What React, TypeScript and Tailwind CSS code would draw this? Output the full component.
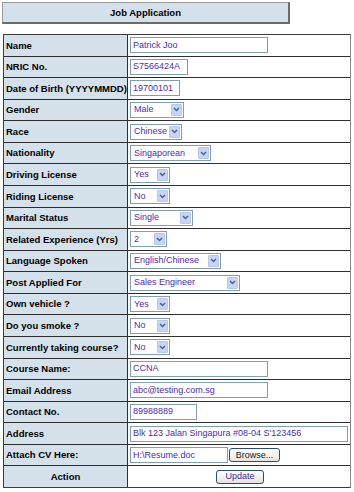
import React from "react";

type Row = {
  label: string;
  kind: "input" | "select" | "file" | "action";
  value?: string;
  w?: number;
};

const rows: Row[] = [
  { label: "Name", kind: "input", value: "Patrick Joo", w: 138 },
  { label: "NRIC No.", kind: "input", value: "S7566424A", w: 58 },
  { label: "Date of Birth (YYYYMMDD)", kind: "input", value: "19700101", w: 50 },
  { label: "Gender", kind: "select", value: "Male", w: 54 },
  { label: "Race", kind: "select", value: "Chinese", w: 52 },
  { label: "Nationality", kind: "select", value: "Singaporean", w: 81 },
  { label: "Driving License", kind: "select", value: "Yes", w: 40 },
  { label: "Riding License", kind: "select", value: "No", w: 40 },
  { label: "Marital Status", kind: "select", value: "Single", w: 63 },
  { label: "Related Experience (Yrs)", kind: "select", value: "2", w: 37 },
  { label: "Language Spoken", kind: "select", value: "English/Chinese", w: 91 },
  { label: "Post Applied For", kind: "select", value: "Sales Engineer", w: 110 },
  { label: "Own vehicle ?", kind: "select", value: "Yes", w: 40 },
  { label: "Do you smoke ?", kind: "select", value: "No", w: 40 },
  { label: "Currently taking course?", kind: "select", value: "No", w: 40 },
  { label: "Course Name:", kind: "input", value: "CCNA", w: 138 },
  { label: "Email Address", kind: "input", value: "abc@testing.com.sg", w: 138 },
  { label: "Contact No.", kind: "input", value: "89988889", w: 67 },
  { label: "Address", kind: "input", value: "Blk 123 Jalan Singapura #08-04 S'123456", w: 218 },
  { label: "Attach CV Here:", kind: "file", value: "H:\\Resume.doc", w: 98 },
  { label: "Action", kind: "action" },
];

function TextBox({ value, w }: { value?: string; w?: number }) {
  return (
    <div
      className="flex h-[16px] shrink-0 items-center overflow-hidden whitespace-nowrap border border-[#7f9db9] bg-white px-[2px] text-[9px] text-[#4a2cb8]"
      style={{ width: w }}
    >
      {value}
    </div>
  );
}

function Select({ value, w }: { value?: string; w?: number }) {
  return (
    <div
      className="flex h-[16px] shrink-0 items-center justify-between border border-[#7f9db9] bg-white pl-[3px] pr-[1px] text-[9px] text-[#4a2cb8]"
      style={{ width: w }}
    >
      <span className="overflow-hidden whitespace-nowrap">{value}</span>
      <span className="flex h-[12px] w-[11px] shrink-0 items-center justify-center rounded-[1px] border border-[#b7c8f0] bg-[#c6d5f7]">
        <svg width="7" height="5" viewBox="0 0 7 5">
          <path d="M1 1 L3.5 3.5 L6 1" fill="none" stroke="#4d6185" strokeWidth="1.5" />
        </svg>
      </span>
    </div>
  );
}

function Btn({ children, w, text }: { children: React.ReactNode; w: number; text: string }) {
  return (
    <div
      className={`flex h-[14px] shrink-0 items-center justify-center rounded-[3px] border border-[#2a4a7c] bg-gradient-to-b from-white to-[#e6e4dc] text-[9px] ${text}`}
      style={{ width: w }}
    >
      {children}
    </div>
  );
}

export default function App() {
  return (
    <div className="h-[492px] w-[354px] bg-white pt-[2px] text-[9.5px] leading-none text-black [font-family:'Liberation_Sans',Arial,sans-serif]">
      <div className="ml-[2px] flex h-[22px] w-[288px] items-center justify-center border-l border-t border-b-2 border-r-2 border-l-[#999] border-t-[#999] border-b-[#6b6b6b] border-r-[#6b6b6b] bg-[#d4e0ea] font-bold">
        Job Application
      </div>

      <div className="ml-[3px] mt-[10px] grid h-[454px] w-[348px] grid-cols-[123px_222px] grid-rows-[repeat(21,minmax(0,1fr))] gap-px border border-[#3c3c3c] border-r-[#8a8a8a] bg-[#2e2e2e]">
        {rows.map((r) => (
          <React.Fragment key={r.label}>
            <div
              className={`flex items-center bg-[#d4e0ea] px-[2px] font-bold whitespace-nowrap ${
                r.kind === "action" ? "justify-center" : ""
              }`}
            >
              {r.label}
            </div>
            <div
              className={`flex items-center bg-white pl-[2px] ${
                r.kind === "action" ? "justify-center pl-0" : ""
              }`}
            >
              {r.kind === "input" && <TextBox value={r.value} w={r.w} />}
              {r.kind === "select" && <Select value={r.value} w={r.w} />}
              {r.kind === "file" && (
                <div className="flex items-center gap-px">
                  <TextBox value={r.value} w={r.w} />
                  <Btn w={51} text="text-[#222]">
                    Browse...
                  </Btn>
                </div>
              )}
              {r.kind === "action" && (
                <Btn w={48} text="text-[#3b2aa6]">
                  Update
                </Btn>
              )}
            </div>
          </React.Fragment>
        ))}
      </div>
    </div>
  );
}
